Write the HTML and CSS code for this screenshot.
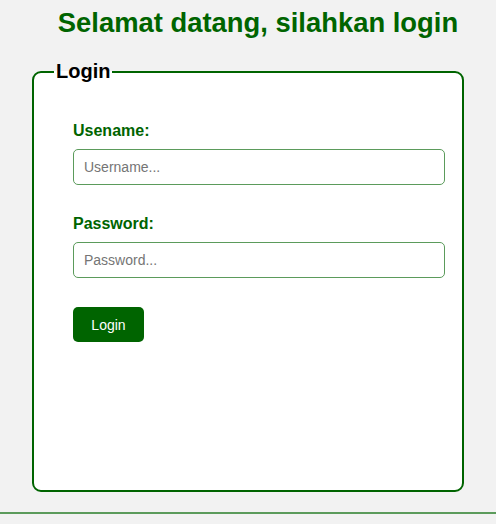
FILE: index.html
```html
<!DOCTYPE html>
<html>
<head>
<meta charset="utf-8">
<link rel="stylesheet" href="styles.css">
</head>
<body>
<div class="page">
  <h1 class="title">Selamat datang, silahkan login</h1>
  <fieldset class="box">
    <legend class="box-legend">Login</legend>
    <form class="form">
      <label class="label" for="u">Usename:</label>
      <input class="input" id="u" type="text" placeholder="Username...">
      <label class="label label-second" for="p">Password:</label>
      <input class="input" id="p" type="password" placeholder="Password...">
      <button class="btn" type="button">Login</button>
    </form>
  </fieldset>
  <div class="footer-line"></div>
</div>
</body>
</html>
```

FILE: styles.css
```css
html, body {
  margin: 0;
  padding: 0;
  background: #f2f2f2;
  font-family: "Liberation Sans", Arial, sans-serif;
}
.page {
  width: 496px;
  height: 524px;
  display: flex;
  flex-direction: column;
  align-items: center;
}
.title {
  margin: 7px 0 0 20px;
  font-size: 27.4px;
  font-weight: bold;
  color: #006400;
  line-height: 32px;
}
.box {
  box-sizing: border-box;
  width: 432px;
  min-inline-size: 0;
  height: 432px;
  margin: 21px 0 0 0;
  padding: 0 12px 0 20px;
  border: 2px solid #006400;
  border-radius: 9px;
  background: #fff;
}
.box-legend {
  padding: 0 2px;
  font-size: 20px;
  font-weight: bold;
  color: #000;
  line-height: 23px;
}
.form {
  display: flex;
  flex-direction: column;
  align-items: flex-start;
  padding: 39px 0 0 19px;
}
.label {
  font-size: 16px;
  font-weight: bold;
  color: #006400;
  line-height: 18px;
  margin-bottom: 9px;
}
.label-second {
  margin-top: 30px;
}
.input {
  box-sizing: border-box;
  width: 372px;
  height: 36px;
  margin: 0;
  padding: 0 10px;
  border: 1px solid #5b9b5b;
  border-radius: 5px;
  font-family: "Liberation Sans", Arial, sans-serif;
  font-size: 14px;
  color: #333;
  background: #fff;
  outline: none;
}
.input::placeholder {
  color: #757575;
}
.btn {
  margin-top: 29px;
  width: 71px;
  height: 35px;
  border: none;
  border-radius: 5px;
  background: #006400;
  color: #fff;
  font-family: "Liberation Sans", Arial, sans-serif;
  font-size: 14px;
  padding: 0;
}
.footer-line {
  align-self: stretch;
  margin-top: 20px;
  height: 2px;
  background: #5b9b5b;
}
```
